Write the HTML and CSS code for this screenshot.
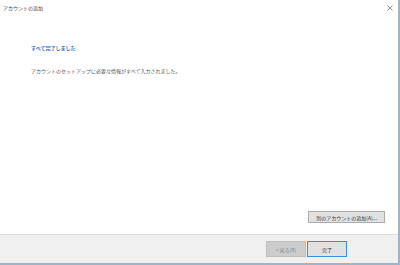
FILE: index.html
```html
<!DOCTYPE html>
<html lang="ja">
<head>
    <meta charset="UTF-8">
    <title>アカウントの追加</title>
    <link rel="stylesheet" href="styles.css">
</head>
<body>
    <div class="window">
        <div class="titlebar">
            <span class="title">アカウントの追加</span>
            <svg class="close" width="6" height="6" viewBox="0 0 6 6">
                <path d="M0.5 0.5 L5.5 5.5 M5.5 0.5 L0.5 5.5" stroke="#7a7a7a" stroke-width="0.8" fill="none"/>
            </svg>
        </div>
        <div class="content">
            <h1 class="heading">すべて完了しました</h1>
            <p class="message">アカウントのセットアップに必要な情報がすべて入力されました。</p>
            <div class="extra">
                <button class="btn">別のアカウントの追加(A)...</button>
            </div>
        </div>
        <div class="footer">
            <button class="btn nav" disabled>&lt; 戻る(B)</button>
            <button class="btn nav primary">完了</button>
        </div>
    </div>
</body>
</html>
```

FILE: styles.css
```css
body {
    margin: 0;
    font-family: "Noto Sans CJK JP", "Noto Sans", sans-serif;
    background-color: #fff;
}
.window {
    width: 398px;
    height: 263px;
    border-right: 2px solid #9fb4c7;
    border-bottom: 2px solid #9fb4c7;
    display: flex;
    flex-direction: column;
    background-color: #fff;
}
.titlebar {
    height: 14px;
    display: flex;
    justify-content: space-between;
    align-items: center;
    padding: 0 5px 0 3px;
    font-size: 5px;
    color: #444;
}
.close {
    margin-top: 1px;
}
.content {
    flex: 1;
    display: flex;
    flex-direction: column;
    padding: 30px 0 11px 31px;
}
.heading {
    margin: 0;
    font-size: 5px;
    line-height: 7px;
    font-weight: bold;
    color: #3a6cc4;
}
.message {
    margin: 16px 0 0;
    font-size: 5px;
    line-height: 7px;
    color: #555;
}
.extra {
    margin-top: auto;
    display: flex;
    justify-content: flex-end;
    padding-right: 13px;
}
.btn {
    font-family: inherit;
    font-size: 5px;
    color: #333;
    background-color: #e1e1e1;
    border: 1px solid #adadad;
    padding: 0;
    margin: 0;
    height: 12px;
    width: 77px;
}
.footer {
    height: 28px;
    border-top: 1px solid #dcdcdc;
    background-color: #f0f0f0;
    display: flex;
    justify-content: flex-end;
    align-items: center;
    gap: 1px;
    padding-right: 51px;
}
.nav {
    width: 40px;
    height: 16px;
}
.nav:disabled {
    background-color: #cccccc;
    border-color: #bfbfbf;
    color: #8a8a8a;
}
.primary {
    border-color: #3c8ddc;
}
```
